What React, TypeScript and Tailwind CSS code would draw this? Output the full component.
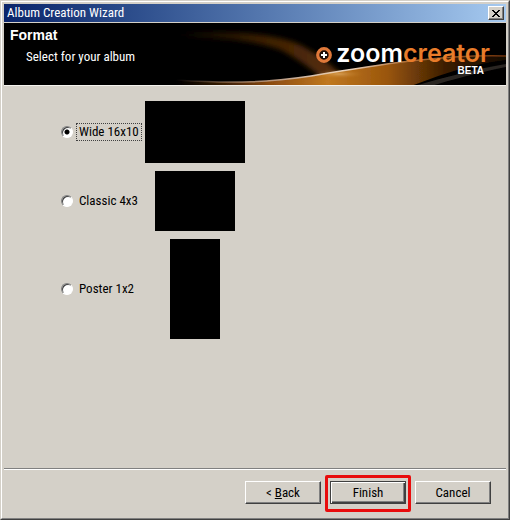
import { useState } from "react";
import type { ReactNode } from "react";
import clsx from "clsx";

const formats = [
  { id: "wide", label: "Wide 16x10", preview: "w-[100px] h-[62px]" },
  { id: "classic", label: "Classic 4x3", preview: "w-20 h-[60px]" },
  { id: "poster", label: "Poster 1x2", preview: "w-[50px] h-[100px]" },
];

const raised =
  "border border-t-white border-l-white border-r-[#404040] border-b-[#404040] shadow-[inset_-1px_-1px_0_#808080]";

function TitleBar() {
  return (
    <div className="flex h-[18px] items-center justify-between bg-linear-to-r from-[#0a246a] to-[#a6caf0] pr-0.5 pl-[3px]">
      <h1 className="leading-4 text-white">Album Creation Wizard</h1>
      <button
        aria-label="Close"
        className={clsx("flex h-3.5 w-4 items-center justify-center bg-[#d4d0c8]", raised)}
      >
        <svg width="8" height="7" viewBox="0 0 8 7" shapeRendering="crispEdges">
          <path
            d="M0 0h2v1h1v1h2v-1h1v-1h2v1h-1v1h-1v1h-1v1h1v1h1v1h1v1h-2v-1h-1v-1h-2v1h-1v1h-2v-1h1v-1h1v-1h1v-1h-1v-1h-1v-1h-1z"
            fill="#000"
          />
        </svg>
      </button>
    </div>
  );
}

function HeaderWaves() {
  return (
    <svg
      className="absolute inset-y-0 right-0 h-full w-[350px]"
      viewBox="0 0 350 62"
      preserveAspectRatio="none"
      aria-hidden="true"
    >
      <defs>
        <linearGradient id="arc" x1="0" x2="1">
          <stop offset="0" stopColor="#3a1e04" stopOpacity="0" />
          <stop offset="0.5" stopColor="#3a1e04" />
          <stop offset="1" stopColor="#5a300a" />
        </linearGradient>
        <linearGradient id="band" x1="0" x2="1">
          <stop offset="0" stopColor="#5a2c06" stopOpacity="0" />
          <stop offset="0.28" stopColor="#8a4a10" />
          <stop offset="0.46" stopColor="#c07820" />
          <stop offset="0.64" stopColor="#9a560c" />
          <stop offset="0.82" stopColor="#3a1c02" />
          <stop offset="1" stopColor="#140a02" />
        </linearGradient>
        <linearGradient id="edge" x1="0" x2="1">
          <stop offset="0" stopColor="#d8b090" stopOpacity="0" />
          <stop offset="0.3" stopColor="#b89880" />
          <stop offset="0.5" stopColor="#f0e0d0" />
          <stop offset="0.7" stopColor="#b07038" />
          <stop offset="1" stopColor="#6a3008" />
        </linearGradient>
        <radialGradient id="glow">
          <stop offset="0" stopColor="#ffdca0" stopOpacity="0.8" />
          <stop offset="1" stopColor="#c07018" stopOpacity="0" />
        </radialGradient>
        <filter id="soft" x="-20%" y="-50%" width="140%" height="200%">
          <feGaussianBlur stdDeviation="2.5" />
        </filter>
        <filter id="fine" x="-10%" y="-30%" width="120%" height="160%">
          <feGaussianBlur stdDeviation="0.6" />
        </filter>
      </defs>
      <path
        d="M20 10C70 7 115 10 140 20C158 28 170 38 186 52L165 54C150 42 140 35 125 27C95 16 60 15 20 14z"
        fill="url(#arc)"
        filter="url(#soft)"
      />
      <path
        d="M20 57C80 61 115 59 155 53C190 47 220 42 254 38C290 34 320 32 350 33V37C310 42 285 52 255 63H20z"
        fill="url(#band)"
        filter="url(#fine)"
      />
      <path
        d="M20 57C80 61 115 59 155 53C190 47 220 42 254 38C290 34 320 32 350 33"
        fill="none"
        stroke="url(#edge)"
        strokeWidth="1.4"
        filter="url(#fine)"
      />
      <path
        d="M262 62C290 54 320 46 350 41V44C320 50 295 57 275 63z"
        fill="#2a2624"
        filter="url(#fine)"
      />
      <ellipse cx="183" cy="51" rx="26" ry="5" fill="url(#glow)" opacity="0.5" />
    </svg>
  );
}

function Logo() {
  return (
    <div className="relative flex items-start gap-1">
      <svg className="mt-6" width="16" height="16" viewBox="0 0 16 16" aria-hidden="true">
        <circle cx="8" cy="8" r="6.3" fill="#1c0c06" stroke="#e0793a" strokeWidth="3.2" />
        <path d="M7 5h2v2h2v2h-2v2h-2v-2h-2v-2h2z" fill="#fff" />
      </svg>
      <div className="flex flex-col items-end pt-[18px]">
        <p className="font-[Inter,sans-serif] text-[25px] leading-6 font-semibold text-[#e87c2a]">
          <span className="text-white">zoom</span>creator
        </p>
        <p className="pr-1.5 font-['Liberation_Sans',sans-serif] text-[10px] leading-3 font-bold text-white">
          BETA
        </p>
      </div>
    </div>
  );
}

function WizardHeader() {
  return (
    <header className="relative mt-px flex h-[62px] justify-between overflow-hidden bg-black pr-4 pl-1.5 text-white">
      <HeaderWaves />
      <div className="relative pt-1">
        <h2 className="font-['Liberation_Sans',sans-serif] text-sm leading-4 font-bold">Format</h2>
        <p className="mt-1.5 pl-4 leading-4">Select for your album</p>
      </div>
      <Logo />
    </header>
  );
}

interface FormatOptionProps {
  id: string;
  label: string;
  preview: string;
  checked: boolean;
  onSelect: (id: string) => void;
}

function FormatOption({ id, label, preview, checked, onSelect }: FormatOptionProps) {
  return (
    <div className="flex items-center">
      <div className="flex w-21 items-center gap-[3px]">
        <input
          type="radio"
          id={id}
          name="format"
          value={id}
          checked={checked}
          onChange={() => onSelect(id)}
          className="h-3 w-3 shrink-0 appearance-none rounded-full border border-t-[#808080] border-r-white border-b-white border-l-[#808080] bg-white shadow-[inset_1px_1px_0_#404040] checked:bg-[radial-gradient(circle,#000_2px,#fff_3px)]"
        />
        <label
          htmlFor={id}
          className={clsx(
            "border border-dotted px-0.5 leading-4 whitespace-nowrap",
            checked ? "border-[#404040]" : "border-transparent"
          )}
        >
          {label}
        </label>
      </div>
      <div className="flex w-[100px] justify-center">
        <div className={clsx("bg-black", preview)} />
      </div>
    </div>
  );
}

function WizardButton({ children, isDefault }: { children: ReactNode; isDefault?: boolean }) {
  return (
    <button
      className={clsx(
        "h-[23px] w-[76px] bg-[#d4d0c8] leading-4",
        isDefault
          ? "border border-[#404040] shadow-[inset_1px_1px_0_#fff,inset_-1px_-1px_0_#404040,inset_-2px_-2px_0_#808080]"
          : raised
      )}
    >
      {children}
    </button>
  );
}

export default function App() {
  const [format, setFormat] = useState("wide");

  return (
    <div className="flex min-h-screen flex-col border border-t-[#d4d0c8] border-r-[#404040] border-b-[#404040] border-l-[#d4d0c8] bg-[#d4d0c8] font-['Roboto_Condensed',Roboto,sans-serif] text-[13px] text-black">
      <div className="flex flex-1 flex-col border border-t-white border-r-[#808080] border-b-[#808080] border-l-white p-0.5">
        <TitleBar />
        <WizardHeader />
        <main className="flex flex-1 flex-col gap-2 border-t border-[#f4f2ee] pt-[15px] pl-[57px]">
          {formats.map((item) => (
            <FormatOption
              key={item.id}
              {...item}
              checked={format === item.id}
              onSelect={setFormat}
            />
          ))}
        </main>
        <footer className="flex justify-end gap-[9px] border-t border-[#808080] pt-3 pr-[15px] pb-3 shadow-[inset_0_1px_0_#fff]">
          <WizardButton>
            &lt; <u>B</u>ack
          </WizardButton>
          <div className="relative">
            <WizardButton isDefault>Finish</WizardButton>
            <div className="pointer-events-none absolute -inset-x-[5px] -top-1.5 -bottom-2 rounded-xs border-3 border-[#e80c0c]" />
          </div>
          <WizardButton>Cancel</WizardButton>
        </footer>
      </div>
    </div>
  );
}
